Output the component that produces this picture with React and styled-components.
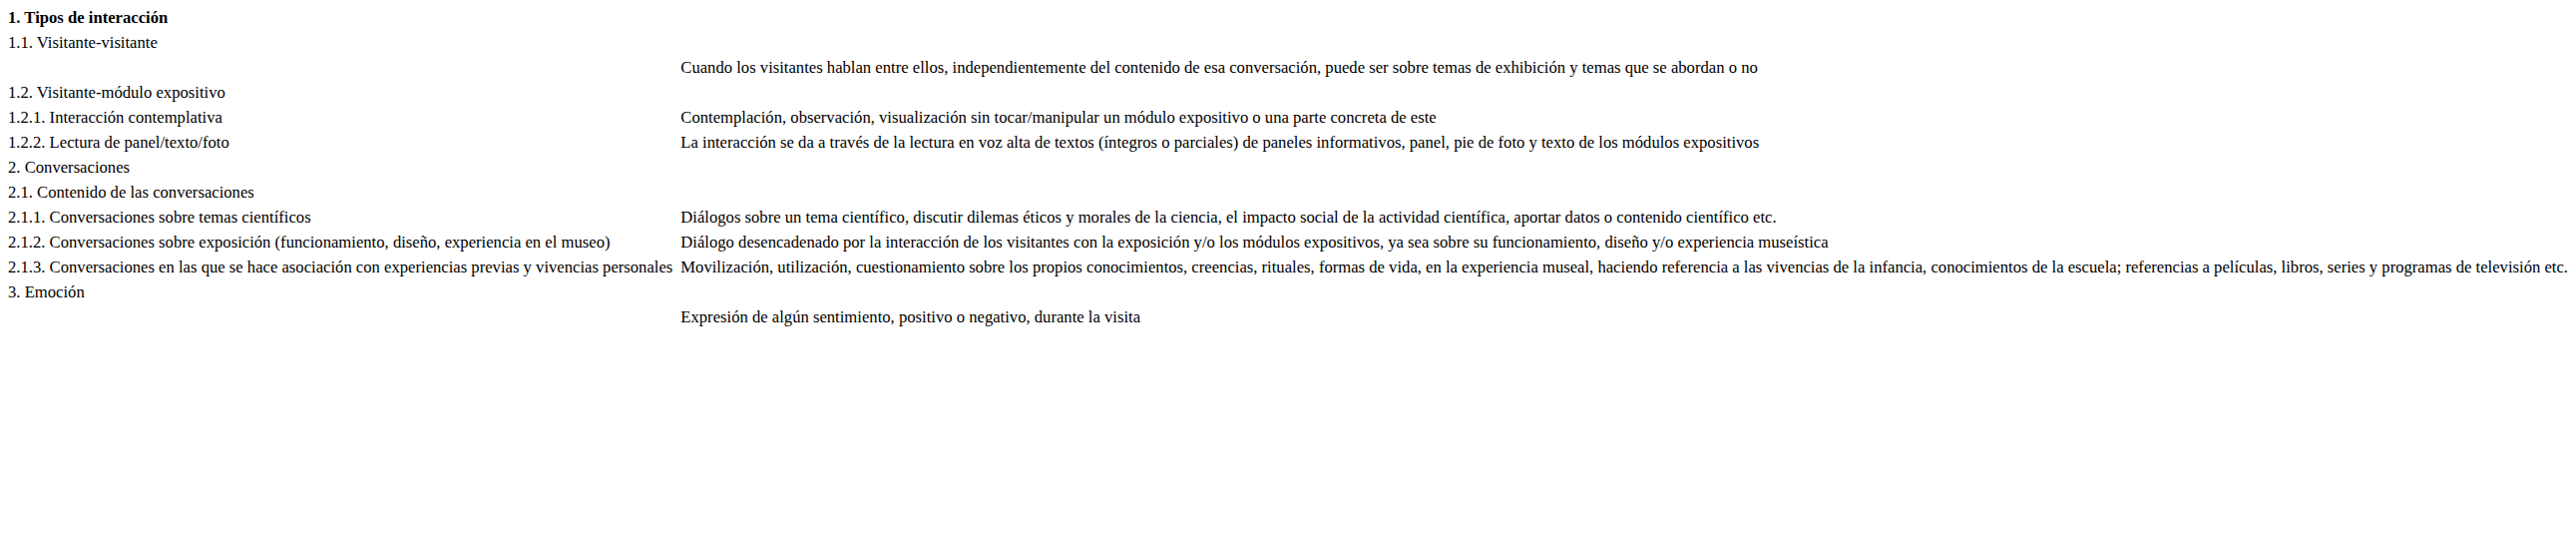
import styled, { createGlobalStyle } from "styled-components";

const GlobalStyle = createGlobalStyle`
  body {
    margin: 8px;
    background: #fff;
    color: #000;
    font-family: "Liberation Serif", serif;
  }
`;

const Table = styled.table`
  border-collapse: collapse;
  font-size: 16.65px;
`;

const Row = styled.tr`
  height: 25px;
`;

const Cell = styled.td`
  padding: 0 8px 0 0;
  white-space: nowrap;
  vertical-align: top;
  font-weight: ${(p) => (p.$bold ? "bold" : "normal")};
`;

const rows = [
  ["1. Tipos de interacción", "", true],
  ["1.1. Visitante-visitante", ""],
  ["", "Cuando los visitantes hablan entre ellos, independientemente del contenido de esa conversación, puede ser sobre temas de exhibición y temas que se abordan o no"],
  ["1.2. Visitante-módulo expositivo", ""],
  ["1.2.1. Interacción contemplativa", "Contemplación, observación, visualización sin tocar/manipular un módulo expositivo o una parte concreta de este"],
  ["1.2.2. Lectura de panel/texto/foto", "La interacción se da a través de la lectura en voz alta de textos (íntegros o parciales) de paneles informativos, panel, pie de foto y texto de los módulos expositivos"],
  ["2. Conversaciones", ""],
  ["2.1. Contenido de las conversaciones", ""],
  ["2.1.1. Conversaciones sobre temas científicos", "Diálogos sobre un tema científico, discutir dilemas éticos y morales de la ciencia, el impacto social de la actividad científica, aportar datos o contenido científico etc."],
  ["2.1.2. Conversaciones sobre exposición (funcionamiento, diseño, experiencia en el museo)", "Diálogo desencadenado por la interacción de los visitantes con la exposición y/o los módulos expositivos, ya sea sobre su funcionamiento, diseño y/o experiencia museística"],
  ["2.1.3. Conversaciones en las que se hace asociación con experiencias previas y vivencias personales", "Movilización, utilización, cuestionamiento sobre los propios conocimientos, creencias, rituales, formas de vida, en la experiencia museal, haciendo referencia a las vivencias de la infancia, conocimientos de la escuela; referencias a películas, libros, series y programas de televisión etc."],
  ["3. Emoción", ""],
  ["", "Expresión de algún sentimiento, positivo o negativo, durante la visita"],
];

export default function App() {
  return (
    <>
      <GlobalStyle />
      <Table>
        <tbody>
          {rows.map(([term, desc, bold], i) => (
            <Row key={i}>
              <Cell $bold={bold}>{term}</Cell>
              <Cell>{desc}</Cell>
            </Row>
          ))}
        </tbody>
      </Table>
    </>
  );
}
